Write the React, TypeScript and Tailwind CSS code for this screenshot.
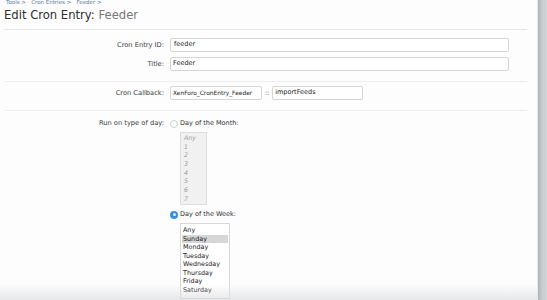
import React from "react";

const font = { fontFamily: '"DejaVu Sans", Verdana, sans-serif' };

function Label({ children }: { children: React.ReactNode }) {
  return (
    <div className="w-[165px] shrink-0 text-right text-[6.7px] text-[#3a3a3a] pr-[1px]">{children}</div>
  );
}

function Input({ value, className, small }: { value: string; className: string; small?: boolean }) {
  return (
    <div
      className={`h-[14px] border border-[#d6d6d6] rounded-[2px] bg-white flex items-center pl-[2px] text-[#1a1a1a] whitespace-nowrap overflow-hidden ${small ? "text-[5.9px]" : "text-[6.5px]"} ${className}`}
    >
      {value}
    </div>
  );
}

export default function App() {
  const months = ["Any", "1", "2", "3", "4", "5", "6", "7"];
  const days = ["Any", "Sunday", "Monday", "Tuesday", "Wednesday", "Thursday", "Friday", "Saturday"];
  return (
    <div className="relative w-[547px] h-[300px] overflow-hidden flex bg-white" style={font}>
      <div className="flex-1 bg-[#fdfdfe] flex flex-col">
        <div className="h-[5px] ml-[6px] text-[5.5px] text-[#5577aa] leading-[5px] whitespace-nowrap">
          Tools &gt;&nbsp;&nbsp; Cron Entries &gt;&nbsp;&nbsp; Feeder &gt;
        </div>
        <div className="mt-[3px] ml-[4px] text-[11.6px] leading-[15px] text-[#2e2e2e]">
          Edit Cron Entry: <span className="text-[#777]">Feeder</span>
        </div>
        <div className="mt-[6px] ml-[4px] w-[523px] h-px bg-[#e4e6ea]" />

        <div className="mt-[8px] flex items-center gap-[5px]">
          <Label>Cron Entry ID:</Label>
          <Input value="feeder" className="w-[339px] pl-[3px]" />
        </div>
        <div className="mt-[5px] flex items-center gap-[5px]">
          <Label>Title:</Label>
          <Input value="Feeder" className="w-[339px]" />
        </div>
        <div className="mt-[10px] ml-[4px] w-[523px] h-px bg-[#eceef1]" />

        <div className="mt-[4px] flex items-center gap-[5px]">
          <Label>Cron Callback:</Label>
          <Input value="XenForo_CronEntry_Feeder" className="w-[92px]" small />
          <span className="text-[6.2px] text-[#555] -ml-[2px] -mr-[2px]">::</span>
          <Input value="importFeeds" className="w-[91px]" />
        </div>
        <div className="mt-[10px] ml-[4px] w-[523px] h-px bg-[#eceef1]" />

        <div className="mt-[8px] flex items-start gap-[5px]">
          <div className="h-[9px] flex items-center">
            <Label>Run on type of day:</Label>
          </div>
          <div className="flex flex-col">
            <div className="flex items-center gap-[2px] h-[9px]">
              <span className="w-[8px] h-[8px] rounded-full border border-[#cfcfcf] bg-white" />
              <span className="text-[6.5px] text-[#2e2e2e]">Day of the Month:</span>
            </div>
            <div className="mt-[4px] ml-[10px] w-[27px] h-[73px] border border-[#dedede] bg-[#f1f1f1] pt-[1px] pl-[3px] flex flex-col">
              {months.map((m) => (
                <div key={m} className="h-[8.7px] leading-[8.7px] text-[6.3px] italic text-[#9a9a9a]">
                  {m}
                </div>
              ))}
            </div>
            <div className="mt-[5px] flex items-center gap-[2px] h-[9px]">
              <span className="w-[8px] h-[8px] rounded-full bg-[#3b8fe0] flex items-center justify-center">
                <span className="w-[3px] h-[3px] rounded-full bg-[#dfefff]" />
              </span>
              <span className="text-[6.5px] text-[#2e2e2e]">Day of the Week:</span>
            </div>
            <div className="mt-[4px] ml-[10px] w-[50px] h-[76px] border border-[#d8d8d8] bg-white pt-[2px] px-[1px] flex flex-col">
              {days.map((d) => (
                <div
                  key={d}
                  className={`h-[8.5px] leading-[8.5px] text-[6.4px] text-[#1a1a1a] pl-[1px] ${d === "Sunday" ? "bg-[#d6d6d6]" : ""}`}
                >
                  {d}
                </div>
              ))}
            </div>
          </div>
        </div>
      </div>
      <div className="w-[10px] bg-gradient-to-r from-[#aeb4b8] via-[#c9ced1] to-[#d3d7d9] border-l border-[#e6e8ea]" />
      <div className="absolute left-0 right-[10px] bottom-0 h-[16px] pointer-events-none bg-gradient-to-b from-[rgba(255,255,255,0)] to-[rgba(215,217,220,0.6)]" />
    </div>
  );
}
